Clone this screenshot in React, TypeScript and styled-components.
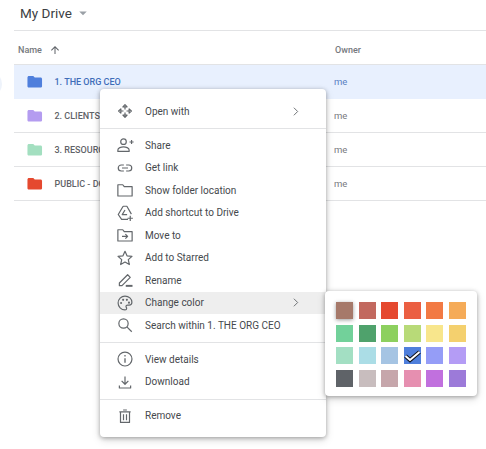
import * as React from "react";
import styled, { createGlobalStyle } from "styled-components";
import { MdFolder, MdArrowUpward, MdArrowDropDown } from "react-icons/md";

const GlobalStyle = createGlobalStyle`
  html, body {
    margin: 0;
    padding: 0;
    background: #fff;
    font-family: Roboto, "Liberation Sans", sans-serif;
    overflow: hidden;
  }
`;

const Page = styled.div`
  position: relative;
  width: 486px;
  height: 449px;
  overflow: hidden;
  padding-left: 14px;
  box-sizing: border-box;
`;

// bit of the left rail that is cropped by the window edge
const RailEdge = styled.div`
  position: absolute;
  left: -24px;
  top: 71px;
  width: 26px;
  height: 26px;
  border-radius: 50%;
  background: #eef3fb;
`;

const TitleBar = styled.div`
  height: 26px;
  display: flex;
  align-items: center;
  padding: 0 0 4px 6px;
  border-bottom: 1px solid #e2e3e5;
  font-size: 13.5px;
  color: #3c4043;
  svg {
    margin-left: 2px;
    color: #9aa0a6;
  }
`;

const Row = styled.div<{ $selected?: boolean }>`
  height: 33px;
  display: grid;
  grid-template-columns: 320px 1fr;
  align-items: center;
  border-bottom: 1px solid ${(p) => (p.$selected ? "#e8f0fe" : "#e2e3e5")};
  background: ${(p) => (p.$selected ? "#e8f0fe" : "#fff")};
  color: ${(p) => (p.$selected ? "#3f6db9" : "#5f6368")};
  font-size: 9px;
  font-weight: 500;
`;

const HeaderRow = styled(Row)`
  color: #75797d;
  padding-top: 4px;
  height: 29px;
`;

const HeaderName = styled.div`
  display: flex;
  align-items: center;
  gap: 7px;
  padding-left: 4px;
  svg {
    color: #5f6368;
  }
`;

const NameCell = styled.div`
  display: flex;
  align-items: center;
  gap: 11px;
  padding-left: 12px;
  white-space: nowrap;
`;

const OwnerCell = styled.div<{ $head?: boolean }>`
  padding-left: ${(p) => (p.$head ? "1px" : "0")};
  font-size: ${(p) => (p.$head ? "9px" : "9.5px")};
  font-weight: ${(p) => (p.$head ? 500 : 400)};
  opacity: ${(p) => (p.$head ? 1 : 0.85)};
`;

const FolderShape = styled(MdFolder)`
  width: 17.5px;
  height: 17.5px;
  flex: none;
`;

const Menu = styled.div`
  position: absolute;
  left: 100px;
  top: 89px;
  width: 226px;
  height: 348px;
  box-sizing: border-box;
  padding-top: 11px;
  background: #fff;
  border-radius: 4px;
  box-shadow: 0 1px 4px rgba(0, 0, 0, 0.3), 0 3px 8px rgba(0, 0, 0, 0.15);
  color: #45494d;
`;

const MenuRow = styled.div<{ $active?: boolean }>`
  height: 22.5px;
  display: flex;
  align-items: center;
  padding: 0 24.5px 0 16px;
  gap: 11px;
  font-size: 10px;
  white-space: nowrap;
  background: ${(p) => (p.$active ? "#eeeeee" : "transparent")};
`;

const MenuIcon = styled.svg`
  width: 18px;
  height: 18px;
  flex: none;
  fill: none;
  stroke: #63676b;
  stroke-width: 1.6;
  stroke-linejoin: round;
  circle.dot {
    fill: #63676b;
    stroke: none;
  }
`;

const MenuLabel = styled.span`
  flex: 1;
`;

const Chevron = styled.svg`
  width: 13px;
  height: 13px;
  fill: none;
  stroke: #63676b;
  stroke-width: 1.7;
`;

const MenuDivider = styled.div`
  height: 1px;
  margin: 5.5px 0 5px;
  background: #e2e3e5;
`;

const Palette = styled.div`
  position: absolute;
  left: 325px;
  top: 291px;
  width: 152px;
  height: 105px;
  box-sizing: border-box;
  padding: 11px 11px 0;
  display: grid;
  grid-template-columns: repeat(6, 17px);
  grid-auto-rows: 17px;
  gap: 5.5px;
  background: #fff;
  border-radius: 4px;
  box-shadow: 0 1px 4px rgba(0, 0, 0, 0.3), 0 3px 8px rgba(0, 0, 0, 0.15);
`;

const Swatch = styled.div<{ $color: string; $raised?: boolean }>`
  display: flex;
  align-items: center;
  justify-content: center;
  background: ${(p) => p.$color};
  box-shadow: ${(p) => (p.$raised ? "0 1px 4px rgba(0,0,0,0.4)" : "none")};
`;

const CheckMark = styled.svg`
  width: 17px;
  height: 17px;
  overflow: visible;
`;

const files = [
  { name: "1. THE ORG CEO", color: "#4f7fdc", selected: true },
  { name: "2. CLIENTS", color: "#b49cf0" },
  { name: "3. RESOURCES", color: "#a3dfc0" },
  { name: "PUBLIC - DOCS", color: "#e5492f" },
];

const swatches = [
  "#a6796a", "#c2695f", "#e5492f", "#eb5f42", "#f27a44", "#f5ab58",
  "#72d19a", "#4fa26c", "#8dd05f", "#b8da78", "#f8e68c", "#f4d06e",
  "#a3dfc3", "#abdde6", "#a5c4e3", "#4f7fdc", "#959df7", "#b49cf5",
  "#5f6368", "#c8bdbe", "#c6a6ab", "#e68fb0", "#c170de", "#9c7ad9",
];

const icons: Record<string, React.ReactNode> = {
  open: (
    <path d="M12 3.5l2.8 3h-5.6zM12 20.5l-2.800-3h5.600zM3.500 12l3-2.800v5.600zM20.500 12l-3 2.800v-5.600zM12 6.500v3.500M12 14v3.500M6.500 12H10M14 12h3.500" />
  ),
  share: (
    <>
      <circle cx="10" cy="7.5" r="3.7" />
      <path d="M2.500 20.500v-2c0-2.600 4.500-4 7.500-4s7.500 1.400 7.500 4v2zM18 8h5.500M20.750 5.250v5.500" />
    </>
  ),
  link: <path d="M10.500 8H7a4 4 0 0 0 0 8h3.500M13.500 8H17a4 4 0 0 1 0 8h-3.500M8 12h8" />,
  folder: <path d="M2.500 5h6.500l2 2.500h10.500v12.500H2.500z" />,
  shortcut: (
    <path d="M9.500 3h5l6 10.500M16 20.500H7.500L3 14 9.500 3M12 8l-3.700 6.200h6.500M19 15.500v7M15.500 19h7" />
  ),
  move: <path d="M2.500 5h6.500l2 2.500h10.500v12.500H2.500zM8 13.750h7.500M12.500 10.750l3 3-3 3" />,
  star: (
    <path d="M12 3l2.700 6.100 6.600.7-4.900 4.400 1.400 6.500L12 17.400l-5.800 3.300 1.400-6.500-4.900-4.400 6.600-.7z" />
  ),
  rename: (
    <>
      <path d="M4.500 19.500v-3.500L15.500 5l3.500 3.500L8 19.500z" />
      <path d="M13 19.800h9" strokeWidth="2.600" />
    </>
  ),
  palette: (
    <>
      <path d="M12 2.800a9.200 9.200 0 0 0 0 18.400c1.500 0 2.200-1 2.200-2 0-1.200-.9-1.500-.9-2.600 0-1 .9-1.800 2-1.800h2.200c2.100 0 3.700-1.600 3.700-3.700C21.200 6.200 17.200 2.800 12 2.800z" />
      <circle className="dot" cx="6.8" cy="12" r="1.4" />
      <circle className="dot" cx="9.5" cy="7.8" r="1.4" />
      <circle className="dot" cx="14.5" cy="7.8" r="1.4" />
      <circle className="dot" cx="17.3" cy="11.5" r="1.4" />
    </>
  ),
  search: (
    <>
      <circle cx="10" cy="10" r="6.2" />
      <path d="M14.500 14.500l6.500 6.500" />
    </>
  ),
  info: (
    <>
      <circle cx="12" cy="12" r="9.3" />
      <path d="M12 11v6" strokeWidth="1.8" />
      <circle className="dot" cx="12" cy="7.8" r="1.1" />
    </>
  ),
  download: <path d="M12 4.500v10.500M7.500 10.500l4.500 4.500 4.500-4.500M4.500 16.500v3.500h15v-3.500" />,
  remove: <path d="M6 6.500h12V20.500H6zM4.500 6.500h15M9.500 4h5M10 9.500v8M14 9.500v8" />,
};

type MenuItem = { icon: string; label: string; arrow?: boolean; active?: boolean };

const menuGroups: MenuItem[][] = [
  [{ icon: "open", label: "Open with", arrow: true }],
  [
    { icon: "share", label: "Share" },
    { icon: "link", label: "Get link" },
    { icon: "folder", label: "Show folder location" },
    { icon: "shortcut", label: "Add shortcut to Drive" },
    { icon: "move", label: "Move to" },
    { icon: "star", label: "Add to Starred" },
    { icon: "rename", label: "Rename" },
    { icon: "palette", label: "Change color", arrow: true, active: true },
    { icon: "search", label: "Search within 1. THE ORG CEO" },
  ],
  [
    { icon: "info", label: "View details" },
    { icon: "download", label: "Download" },
  ],
  [{ icon: "remove", label: "Remove" }],
];

const App = () => {
  return (
    <Page>
      <GlobalStyle />
      <RailEdge />
      <TitleBar>
        My Drive
        <MdArrowDropDown size={18} />
      </TitleBar>
      <HeaderRow>
        <HeaderName>
          Name
          <MdArrowUpward size={12} />
        </HeaderName>
        <OwnerCell $head>Owner</OwnerCell>
      </HeaderRow>
      {files.map((file) => (
        <Row key={file.name} $selected={file.selected}>
          <NameCell>
            <FolderShape color={file.color} />
            {file.name}
          </NameCell>
          <OwnerCell>me</OwnerCell>
        </Row>
      ))}

      <Menu>
        {menuGroups.map((group, i) => (
          <React.Fragment key={i}>
            {i > 0 && <MenuDivider />}
            {group.map((item) => (
              <MenuRow key={item.label} $active={item.active}>
                <MenuIcon viewBox="0 0 24 24">{icons[item.icon]}</MenuIcon>
                <MenuLabel>{item.label}</MenuLabel>
                {item.arrow && (
                  <Chevron viewBox="0 0 24 24">
                    <path d="M9 5l7 7-7 7" />
                  </Chevron>
                )}
              </MenuRow>
            ))}
          </React.Fragment>
        ))}
      </Menu>

      <Palette>
        {swatches.map((color, i) => (
          <Swatch key={i} $color={color} $raised={i === 0}>
            {i === 15 && (
              <CheckMark viewBox="0 0 17 17">
                <path d="M1.5 9 L6 13 L15.5 5" fill="none" stroke="#10131a" strokeWidth="4" />
                <path d="M1.5 9 L6 13 L15.5 5" fill="none" stroke="#fff" strokeWidth="2" />
              </CheckMark>
            )}
          </Swatch>
        ))}
      </Palette>
    </Page>
  );
};

export default App;
